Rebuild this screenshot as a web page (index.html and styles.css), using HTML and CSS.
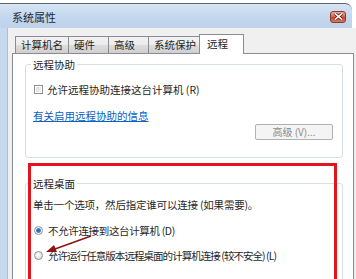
FILE: index.html
```html
<!DOCTYPE html>
<html lang="zh-CN">
  <head>
    <meta charset="UTF-8" />
    <title>系统属性</title>
    <link rel="stylesheet" href="styles.css">
  </head>
  <body>
    <div class="window">
      <div class="titlebar">
        <span class="title">系统属性</span>
        <span class="close">
          <svg width="9" height="7" viewBox="0 0 9 7">
            <path d="M1 0.5 L8 6.5 M8 0.5 L1 6.5" stroke="#6b1e12" stroke-width="3" />
            <path d="M1 0.5 L8 6.5 M8 0.5 L1 6.5" stroke="#ffffff" stroke-width="1.6" />
          </svg>
        </span>
      </div>
      <div class="frame">
        <div class="client">
          <div class="tabs">
            <div class="tab">计算机名</div>
            <div class="tab">硬件</div>
            <div class="tab">高级</div>
            <div class="tab">系统保护</div>
            <div class="tab tab--active">远程</div>
          </div>
          <div class="page">
            <fieldset class="group group--assist">
              <legend>远程协助</legend>
              <label class="option option--first"><span class="checkbox"></span>允许远程协助连接这台计算机 (R)</label>
              <a class="link" href="#">有关启用远程协助的信息</a>
              <div class="actions">
                <button class="btn" disabled>高级 (V)...</button>
              </div>
            </fieldset>
            <fieldset class="group group--desktop">
              <legend>远程桌面</legend>
              <p class="hint">单击一个选项，然后指定谁可以连接 (如果需要)。</p>
              <label class="option option--radio option--snug"><span class="radio radio--on"></span>不允许连接到这台计算机 (D)</label>
              <label class="option option--radio option--tight"><span class="radio"></span>允许运行任意版本远程桌面的计算机连接 (较不安全) (L)</label>
            </fieldset>
          </div>
        </div>
      </div>
      <!-- annotation overlays -->
      <div class="highlight"></div>
      <svg class="arrow" width="356" height="279" viewBox="0 0 356 279">
        <path d="M91 236 L55 249" stroke="#8e1414" stroke-width="1.6" fill="none" />
        <path d="M46 252 L54 245 L57 252 Z" fill="#8e1414" />
      </svg>
    </div>
  </body>
</html>
```

FILE: styles.css
```css
body {
  margin: 0;
  background: #ffffff;
  font-family: "Noto Sans CJK SC", "Microsoft YaHei", sans-serif;
  font-size: 10.5px;
  color: #1f1f1f;
}
.window {
  position: relative;
  width: 356px;
  height: 279px;
  overflow: hidden;
  padding-top: 3px;
  box-sizing: border-box;
}
/* title bar */
.titlebar {
  width: 352px;
  height: 25px;
  box-sizing: border-box;
  display: flex;
  align-items: center;
  padding: 0 5px 0 12px;
  border-top: 1px solid #5d6670;
  border-top-right-radius: 7px;
  background: linear-gradient(#d6e4f4, #c2d6ed 60%, #bed3ea);
}
.title {
  font-size: 11px;
  color: #1e2a36;
  margin-top: 2px;
}
.close {
  margin-left: auto;
  margin-top: 1px;
  margin-right: 1px;
  width: 16px;
  height: 12px;
  box-sizing: border-box;
  display: flex;
  align-items: center;
  justify-content: center;
  border: 1px solid #8b3b30;
  border-radius: 3px;
  background: linear-gradient(#e9a99a, #d26a55 45%, #c24a33 55%, #d27a62);
}
/* frame + client */
.frame {
  display: flex;
  height: 260px;
  background: linear-gradient(90deg, #c6d9ee 0, #c6d9ee 7px, #a9bfd8 7px, #a9bfd8 8px, #f0f0f0 8px);
  padding-left: 8px;
}
.client {
  flex: 1;
  padding: 6px 0 0 4px;
  background: #f0f0f0;
}
.tabs {
  display: flex;
  align-items: flex-end;
  padding-left: 3px;
  height: 19px;
  position: relative;
  z-index: 1;
}
.tab {
  height: 17px;
  min-width: 41px;
  box-sizing: border-box;
  padding: 0 5px;
  line-height: 16px;
  border: 1px solid #898c95;
  border-bottom: 0;
  margin-left: -1px;
  background: linear-gradient(#f2f2f2, #ebebeb 50%, #dddddd 50%, #cfcfcf);
  white-space: nowrap;
}
.tab:first-child {
  margin-left: 0;
}
.tab--active {
  height: 20px;
  min-width: 45px;
  margin: 0 -2px -1px -3px;
  padding-left: 7px;
  line-height: 18px;
  background: #ffffff;
  position: relative;
}
.page {
  height: 240px;
  width: 342px;
  box-sizing: border-box;
  border: 1px solid #898c95;
  border-bottom: 0;
  background: #ffffff;
  padding: 4px 10px 0 12px;
}
/* group boxes */
.group {
  margin: 0;
  padding: 0 9px 0 7px;
  border: 1px solid #d5dfe5;
  border-radius: 3px;
}
.group legend {
  padding: 0 2px;
  margin-left: -2px;
  line-height: 13px;
  font-size: 10.5px;
}
.group--assist {
  height: 100px;
  box-sizing: border-box;
}
.group--desktop {
  margin-top: 19px;
  height: 120px;
}
.option {
  display: flex;
  align-items: center;
  height: 14px;
  white-space: nowrap;
}
.option--first {
  margin-top: 11px;
  margin-left: 1px;
}
.checkbox {
  width: 9px;
  height: 9px;
  box-sizing: border-box;
  border: 1px solid #8f8f8f;
  background: linear-gradient(135deg, #d8d8d8, #f4f4f4);
  box-shadow: inset 0 0 0 1px #ffffff;
  margin-right: 4px;
}
.link {
  display: inline-block;
  margin-top: 13px;
  line-height: 14px;
  color: #0b61c4;
  text-decoration: underline;
}
.actions {
  display: flex;
  justify-content: flex-end;
  margin-top: 1px;
}
.btn {
  width: 78px;
  height: 16px;
  padding: 0;
  font: inherit;
  font-size: 10px;
  line-height: 14px;
  color: #8a8a8a;
  border: 1px solid #adb2b5;
  border-radius: 2px;
  background: #f4f4f4;
}
.hint {
  margin: 8px 0 0;
  line-height: 14px;
  white-space: nowrap;
  letter-spacing: -0.2px;
}
.option--radio {
  margin-top: 11px;
  margin-left: 1px;
}
.option--snug {
  letter-spacing: -0.35px;
}
.option--tight {
  letter-spacing: -0.95px;
}
.radio {
  width: 9px;
  height: 9px;
  box-sizing: border-box;
  border-radius: 50%;
  border: 1px solid #8f8f8f;
  background: radial-gradient(circle at 40% 40%, #ffffff, #d4d4d4);
  margin-right: 5px;
}
.radio--on {
  background: radial-gradient(circle, #1f5fae 0, #3d86d6 2px, #ffffff 3px, #e4e4e4);
}
/* annotation */
.highlight {
  position: absolute;
  left: 28px;
  top: 163px;
  width: 309px;
  height: 140px;
  box-sizing: border-box;
  border: 3px solid #e3141b;
}
.arrow {
  position: absolute;
  left: 0;
  top: 0;
  pointer-events: none;
}
```
